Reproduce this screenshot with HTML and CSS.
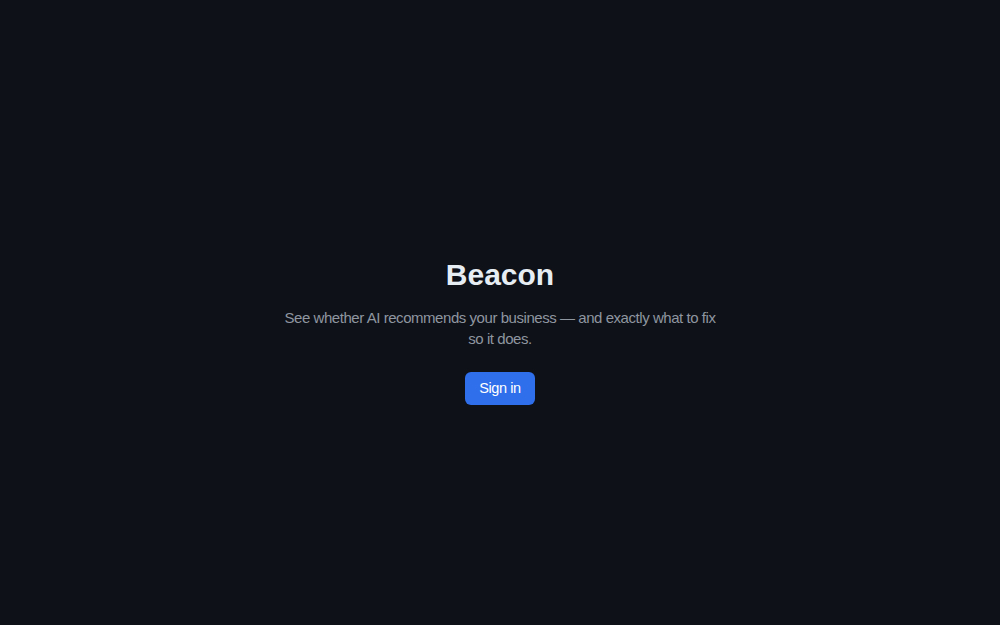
FILE: index.html
```html
<!DOCTYPE html>
<html lang="en">
<head>
    <meta charset="UTF-8">
    <meta name="viewport" content="width=device-width, initial-scale=1.0">
    <title>Beacon</title>
    <link rel="stylesheet" href="styles.css">
</head>
<body>
    <main class="landing">
        <h1>Beacon</h1>
        <p class="tagline">See whether AI recommends your business — and exactly what to fix so it does.</p>
        <button class="signin-btn">Sign in</button>
    </main>
</body>
</html>
```

FILE: styles.css
```css
* {
    margin: 0;
    padding: 0;
    box-sizing: border-box;
    font-family: 'Liberation Sans', Arial, sans-serif;
}

body {
    display: flex;
    justify-content: center;
    align-items: center;
    min-height: 100vh;
    background: #0e1117;
}

.landing {
    display: flex;
    flex-direction: column;
    align-items: center;
    text-align: center;
    padding-top: 36px;
}

h1 {
    color: #e6edf3;
    font-size: 30px;
    font-weight: 700;
    line-height: 36px;
    margin-bottom: 14px;
}

.tagline {
    color: #8f96a0;
    font-size: 15px;
    letter-spacing: -0.45px;
    line-height: 21px;
    max-width: 440px;
    margin-bottom: 23px;
}

.signin-btn {
    padding: 0 14px;
    width: 70px;
    height: 33px;
    background: #2f6feb;
    color: white;
    border: none;
    border-radius: 6px;
    font-size: 14.5px;
    letter-spacing: -0.4px;
    cursor: pointer;
}
```
